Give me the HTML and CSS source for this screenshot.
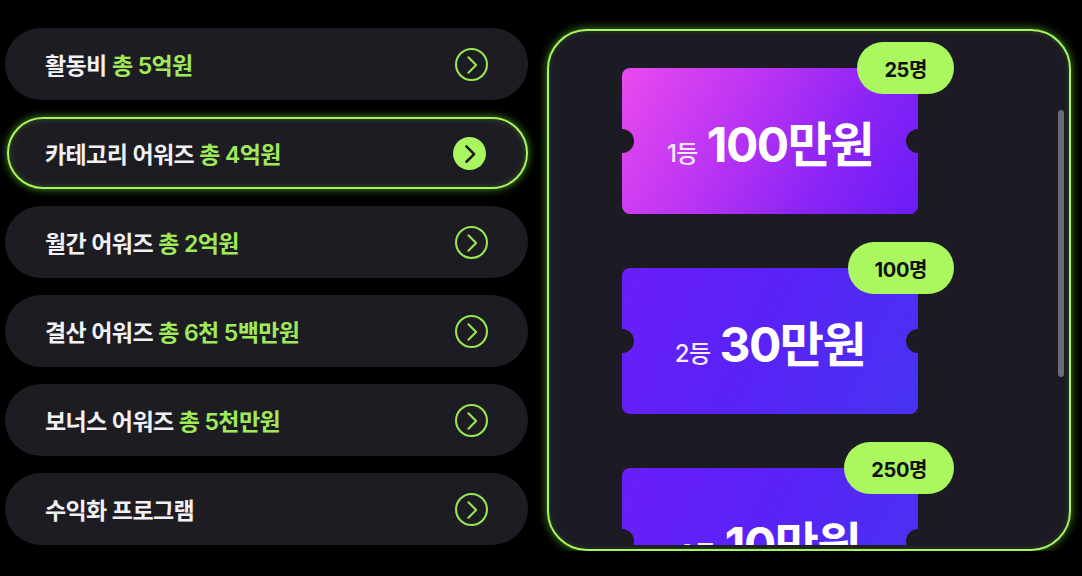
FILE: index.html
```html
<!DOCTYPE html>
<html lang="ko">
<head>
<meta charset="utf-8">
<title>어워즈</title>
<link rel="stylesheet" href="styles.css">
</head>
<body>
<main class="page">
  <ul class="menu">
    <li class="item">
      <span class="label">활동비 <em>총 5억원</em></span>
      <svg class="arrow" viewBox="0 0 32 32"><circle cx="16" cy="16" r="15"/><path d="M13 9 L20.5 16.5 L13 24"/></svg>
    </li>
    <li class="item item--active">
      <span class="label">카테고리 어워즈 <em>총 4억원</em></span>
      <svg class="arrow arrow--fill" viewBox="0 0 32 32"><circle cx="16" cy="16" r="16"/><path d="M13 9 L20.5 16.5 L13 24"/></svg>
    </li>
    <li class="item">
      <span class="label">월간 어워즈 <em>총 2억원</em></span>
      <svg class="arrow" viewBox="0 0 32 32"><circle cx="16" cy="16" r="15"/><path d="M13 9 L20.5 16.5 L13 24"/></svg>
    </li>
    <li class="item">
      <span class="label">결산 어워즈 <em>총 6천 5백만원</em></span>
      <svg class="arrow" viewBox="0 0 32 32"><circle cx="16" cy="16" r="15"/><path d="M13 9 L20.5 16.5 L13 24"/></svg>
    </li>
    <li class="item">
      <span class="label">보너스 어워즈 <em>총 5천만원</em></span>
      <svg class="arrow" viewBox="0 0 32 32"><circle cx="16" cy="16" r="15"/><path d="M13 9 L20.5 16.5 L13 24"/></svg>
    </li>
    <li class="item">
      <span class="label">수익화 프로그램</span>
      <svg class="arrow" viewBox="0 0 32 32"><circle cx="16" cy="16" r="15"/><path d="M13 9 L20.5 16.5 L13 24"/></svg>
    </li>
  </ul>

  <section class="panel">
    <div class="scroll">
      <div class="ticket ticket--first">
        <span class="badge">25명</span>
        <span class="amount"><span class="rank">1등</span><strong class="prize">100만원</strong></span>
      </div>
      <div class="ticket">
        <span class="badge">100명</span>
        <span class="amount"><span class="rank">2등</span><strong class="prize">30만원</strong></span>
      </div>
      <div class="ticket">
        <span class="badge">250명</span>
        <span class="amount"><span class="rank">3등</span><strong class="prize">10만원</strong></span>
      </div>
    </div>
    <div class="thumb"></div>
  </section>
</main>
</body>
</html>
```
FILE: styles.css
```css
html, body {
  margin: 0;
  background: #000;
}

body {
  font-family: Inter, "Noto Sans CJK KR", sans-serif;
  color: #f2f2f4;
}

.page {
  display: flex;
  align-items: flex-start;
  gap: 19px;
  padding: 28px 0 0 5px;
}

/* left menu */
.menu {
  list-style: none;
  margin: 0;
  padding: 0;
  width: 523px;
  display: flex;
  flex-direction: column;
  gap: 17px;
}

.item {
  box-sizing: border-box;
  height: 72px;
  border-radius: 36px;
  background: #1d1c23;
  display: flex;
  align-items: center;
  justify-content: space-between;
  padding: 0 40px;
}

.item--active {
  margin-left: 2px;
  border: 2px solid #a8f55d;
  padding: 0 40px 0 36px;
  box-shadow: 0 0 9px rgba(120, 235, 50, 0.65), inset 0 0 6px rgba(120, 235, 50, 0.25);
}

.label {
  font-size: 23px;
  font-weight: 600;
  letter-spacing: -0.6px;
  color: #f1f1f3;
}

.label em {
  font-style: normal;
  color: #a0ea5a;
}

.arrow {
  width: 33px;
  height: 33px;
  flex: none;
}

.arrow circle {
  fill: none;
  stroke: #99e652;
  stroke-width: 2;
}

.arrow path {
  fill: none;
  stroke: #99e652;
  stroke-width: 2;
  stroke-linecap: round;
  stroke-linejoin: round;
}

.arrow--fill circle {
  fill: #a9f65e;
  stroke: none;
}

.arrow--fill path {
  stroke: #1c1b22;
  stroke-width: 2.4;
}

/* right panel */
.panel {
  position: relative;
  box-sizing: border-box;
  width: 524px;
  height: 522px;
  margin-top: 1px;
  padding: 4px;
  border: 2px solid #a8f55d;
  border-radius: 40px;
  background: #1c1b23;
  box-shadow: 0 0 10px rgba(120, 235, 50, 0.6), inset 0 0 5px rgba(120, 235, 50, 0.2);
}

.scroll {
  box-sizing: border-box;
  height: 100%;
  overflow: hidden;
  display: flex;
  flex-direction: column;
  gap: 54px;
  padding: 33px 0 0 69px;
}

.ticket {
  position: relative;
  flex: none;
  width: 296px;
  height: 146px;
  border-radius: 8px;
  background: linear-gradient(115deg, #6a1ef8 0%, #5a22f7 45%, #4733f2 100%);
  display: flex;
  align-items: center;
  justify-content: center;
  color: #fff;
}

.ticket--first {
  background: linear-gradient(120deg, #ea4aee 0%, #bb34f3 38%, #8a24f6 70%, #681cf8 100%);
}

.ticket::before,
.ticket::after {
  content: "";
  position: absolute;
  top: 50%;
  width: 24px;
  height: 24px;
  margin-top: -12px;
  border-radius: 50%;
  background: #1c1b23;
}

.ticket::before { left: -12px; }
.ticket::after { right: -12px; }

.amount {
  display: flex;
  align-items: baseline;
  gap: 9px;
}

.rank {
  font-size: 24px;
  font-weight: 500;
  letter-spacing: -0.6px;
  color: #f3ebff;
}

.prize {
  font-size: 48px;
  font-weight: 700;
  letter-spacing: -1.5px;
}

.badge {
  position: absolute;
  top: -26px;
  right: -36px;
  height: 52px;
  padding: 0 27px;
  box-sizing: border-box;
  border-radius: 26px;
  background: #abf760;
  color: #111;
  font-size: 20px;
  font-weight: 700;
  letter-spacing: -0.4px;
  display: flex;
  align-items: center;
  z-index: 1;
}

.thumb {
  position: absolute;
  top: 79px;
  right: 5px;
  width: 6px;
  height: 267px;
  border-radius: 3px;
  background: #6b6a77;
}
```
